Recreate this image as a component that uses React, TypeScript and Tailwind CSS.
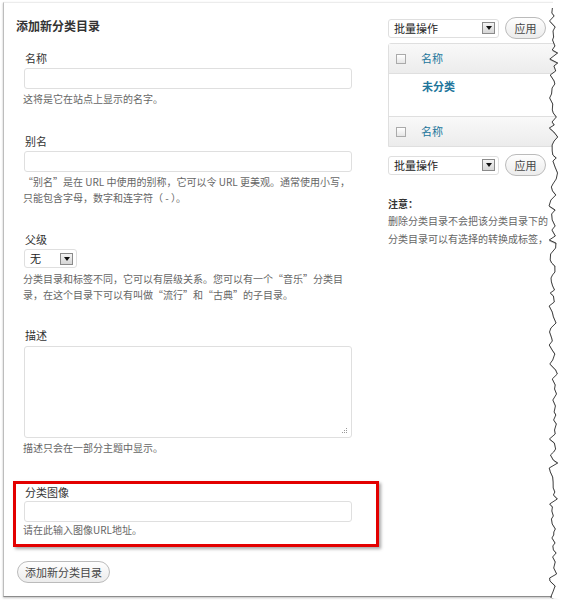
import React from 'react';

const FONT = { fontFamily: '"Noto Sans CJK SC", "Liberation Sans", sans-serif' };

function tearPoints() {
  // deterministic jagged line for the torn right edge
  let seed = 7;
  const rnd = () => {
    seed = (seed * 9301 + 49297) % 233280;
    return seed / 233280;
  };
  const pts: string[] = [];
  for (let y = 8; y <= 598; y += 3 + Math.floor(rnd() * 4)) {
    const x = 4 + rnd() * 7 + (Math.floor(y / 9) % 2 ? 2 : 0);
    pts.push(`${x.toFixed(1)},${y}`);
  }
  pts.push('6,598');
  return pts;
}

function Arrow() {
  return (
    <span className="flex items-center justify-center w-[13px] h-[12px] border border-[#8a8a8a] bg-gradient-to-b from-[#f4f4f4] to-[#d6d6d6]">
      <svg width="6" height="4" viewBox="0 0 6 4"><path d="M0 0h6L3 4z" fill="#111" /></svg>
    </span>
  );
}

function Select({ label, w }: { label: string; w: string }) {
  return (
    <div className={`flex items-center justify-between h-[19px] border border-[#dfdfdf] rounded-[3px] bg-white pl-[5px] pr-[3px] ${w}`}>
      <span className="text-[11px] text-[#222] leading-none">{label}</span>
      <Arrow />
    </div>
  );
}

function Check() {
  return <span className="block w-[10px] h-[10px] border border-[#aaa] bg-gradient-to-b from-[#fff] to-[#e6e6e6]" />;
}

function Button({ children, cls }: { children: React.ReactNode; cls: string }) {
  return (
    <div className={`flex items-center justify-center rounded-full border border-[#bbb] bg-gradient-to-b from-[#fefefe] to-[#ececec] text-[11px] text-[#464646] ${cls}`}>
      {children}
    </div>
  );
}

const label = 'text-[11px] leading-[16px] text-[#333] pl-[21px]';
const hint = 'text-[10px] leading-[16px] text-[#666] pl-[19px]';
const input = 'ml-[20px] w-[328px] border border-[#dfdfdf] rounded-[3px] bg-white';

export default function App() {
  const pts = tearPoints();
  const shadow = pts.map((p) => { const [x, y] = p.split(','); return `${+x + 1.5},${+y + 1}`; }).join(' ');
  return (
    <div className="relative w-[565px] h-[600px] bg-white overflow-hidden pt-[2px] pl-[3px]" style={FONT}>
      <div className="w-[556px] h-[595px] border-l border-t border-b border-l-[#bdbdbd] border-t-[#ececec] border-b-[#8c8c8c] shadow-[0_1px_2px_rgba(0,0,0,0.25)] flex">
        {/* left: add form */}
        <div className="w-[380px] shrink-0">
          <h2 className="mt-[15px] pl-[12px] text-[12px] leading-[16px] font-bold text-[#333]">添加新分类目录</h2>

          <p className={`mt-[16px] ${label}`}>名称</p>
          <div className={`mt-[2px] h-[21px] ${input}`} />
          <p className={`mt-[2px] ${hint}`}>这将是它在站点上显示的名字。</p>

          <p className={`mt-[26px] ${label}`}>别名</p>
          <div className={`mt-[2px] h-[21px] ${input}`} />
          <p className={`mt-[2px] ${hint}`}>
            “别名”是在 URL 中使用的别称，它可以令 URL 更美观。通常使用小写，
            <br />只能包含字母，数字和连字符（ - ）。
          </p>

          <p className={`mt-[25px] ${label}`}>父级</p>
          <div className="mt-[2px] ml-[20px]">
            <Select label="无" w="w-[53px]" />
          </div>
          <p className={`mt-[3px] ${hint}`}>
            分类目录和标签不同，它可以有层级关系。您可以有一个“音乐”分类目
            <br />录，在这个目录下可以有叫做“流行”和“古典”的子目录。
          </p>

          <p className={`mt-[24px] ${label}`}>描述</p>
          <div className={`mt-[3px] h-[92px] relative ${input}`}>
            <svg className="absolute right-[3px] bottom-[3px]" width="7" height="7" viewBox="0 0 7 7">
              <g fill="#999">
                <rect x="5" y="1" width="1" height="1" />
                <rect x="3" y="3" width="1" height="1" />
                <rect x="5" y="3" width="1" height="1" />
                <rect x="1" y="5" width="1" height="1" />
                <rect x="3" y="5" width="1" height="1" />
                <rect x="5" y="5" width="1" height="1" />
              </g>
            </svg>
          </div>
          <p className={`mt-[2px] ${hint}`}>描述只会在一部分主题中显示。</p>

          <div className="mt-[25px] ml-[9px] w-[366px] border-[3px] border-[#e30000] pb-[6px] shadow-[2px_2px_3px_rgba(0,0,0,0.35)]">
            <p className="text-[11px] leading-[16px] text-[#333] pl-[9px]">分类图像</p>
            <div className="mt-[1px] ml-[8px] w-[328px] h-[21px] border border-[#dfdfdf] rounded-[3px] bg-white" />
            <p className="text-[10px] leading-[16px] text-[#666] pl-[7px]">请在此输入图像URL地址。</p>
          </div>

          <Button cls="mt-[14px] ml-[13px] w-[93px] h-[22px]">添加新分类目录</Button>
        </div>

        {/* right: category list */}
        <div className="flex-1 overflow-hidden pl-[4px]">
          <div className="mt-[14px] flex items-center gap-[6px]">
            <Select label="批量操作" w="w-[111px]" />
            <Button cls="w-[41px] h-[22px]">应用</Button>
          </div>
          <div className="mt-[4px] border border-[#dfdfdf] rounded-tl-[3px] w-[200px]">
            <div className="h-[30px] flex items-center bg-gradient-to-b from-[#f9f9f9] to-[#ececec] border-b border-[#dfdfdf] pl-[7px] gap-[15px]">
              <Check />
              <span className="text-[11px] text-[#21759b]">名称</span>
            </div>
            <div className="h-[43px] pl-[33px] pt-[4px] bg-white border-b border-[#dfdfdf] leading-[16px]">
              <span className="block text-[11px] leading-[16px] font-bold text-[#21759b]">未分类</span>
            </div>
            <div className="h-[29px] flex items-center bg-gradient-to-b from-[#f9f9f9] to-[#ececec] pl-[7px] gap-[15px]">
              <Check />
              <span className="text-[11px] text-[#21759b]">名称</span>
            </div>
          </div>
          <div className="mt-[7px] flex items-center gap-[6px]">
            <Select label="批量操作" w="w-[111px]" />
            <Button cls="w-[41px] h-[22px]">应用</Button>
          </div>
          <p className="mt-[20px] text-[10px] leading-[16px] font-bold text-[#333] whitespace-nowrap">注意：</p>
          <p className="text-[10px] leading-[18px] text-[#666] whitespace-nowrap">
            删除分类目录不会把该分类目录下的
            <br />分类目录可以有选择的转换成标签，
          </p>
        </div>
      </div>

      {/* torn edge */}
      <svg className="absolute top-0 right-0" width="20" height="600" viewBox="0 0 20 600">
        <polyline points={shadow} fill="none" stroke="#b5b5b5" strokeWidth="1.6" />
        <polygon points={`${pts.join(' ')} 20,600 20,0 ${pts[0].split(',')[0]},0`} fill="#ffffff" stroke="none" transform="translate(0.6,0)" />
        <polyline points={pts.join(' ')} fill="none" stroke="#2b2b2b" strokeWidth="0.9" />
      </svg>
    </div>
  );
}
